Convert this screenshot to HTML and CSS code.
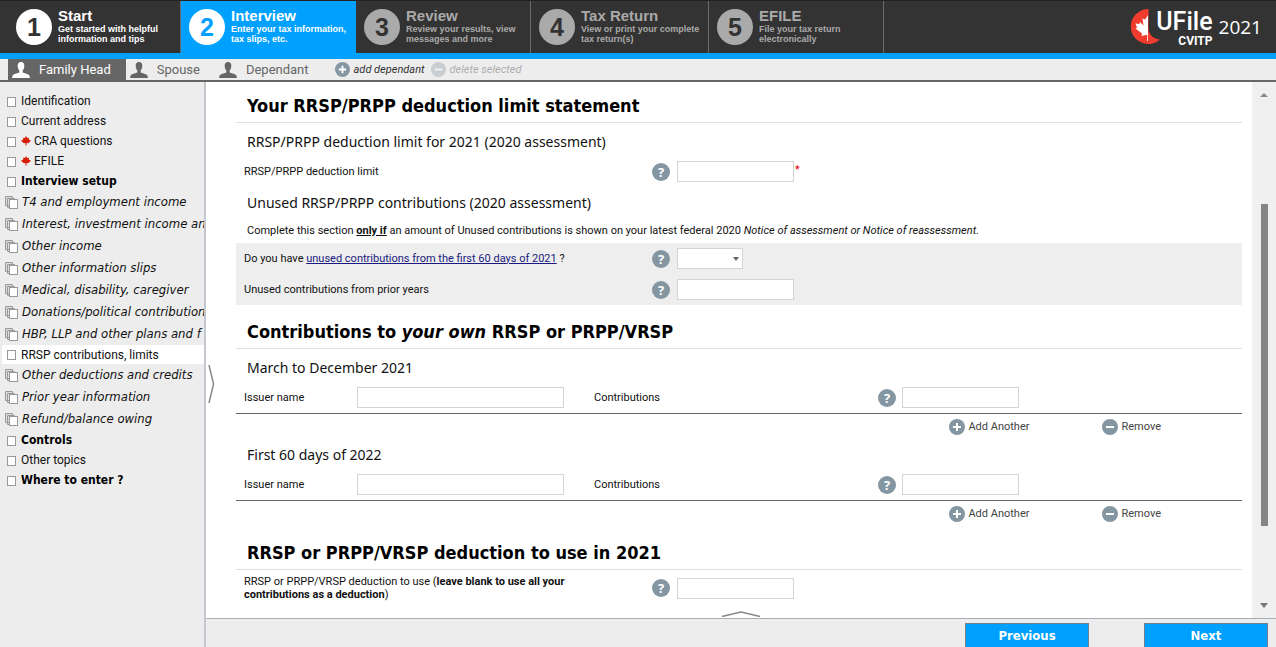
FILE: index.html
```html
<!DOCTYPE html>
<html lang="en">
<head>
<meta charset="utf-8">
<title>UFile CVITP 2021</title>
<link rel="stylesheet" href="styles.css">
</head>
<body>
<svg class="sprite" aria-hidden="true">
  <symbol id="person" viewBox="0 0 18 16"><path d="M9 0C6.500 0 5.500 1.800 5.700 4.200C5.800 6.200 6.500 7.500 7.300 8.300V10.200C6.500 11.300 1 11.800 .5 13.800L0 16H18L17.500 13.800C17 11.800 11.500 11.300 10.700 10.200V8.300C11.500 7.500 12.200 6.200 12.300 4.200C12.500 1.800 11.500 0 9 0Z"/></symbol>
  <symbol id="plus" viewBox="0 0 16 16"><circle cx="8" cy="8" r="8" fill="#8596a3"/><path d="M8 4V12M4 8H12" stroke="#fff" stroke-width="2"/></symbol>
  <symbol id="minus" viewBox="0 0 16 16"><circle cx="8" cy="8" r="8" fill="#8596a3"/><path d="M4 8H12" stroke="#fff" stroke-width="2"/></symbol>
  <symbol id="page" viewBox="0 0 13 13"><rect x="2.500" y="2.500" width="8" height="9" fill="#fff" stroke="#999"/></symbol>
  <symbol id="pages" viewBox="0 0 13 13"><path d="M.5.5H7.500V9.500H.5ZM2.500 2.500H9.500V11.500H2.500Z" fill="#ddd" stroke="#999"/><rect x="4.500" y="3.500" width="8" height="9" fill="#fff" stroke="#999"/></symbol>
  <symbol id="leaf" viewBox="0 0 10 10"><path d="M5 0L6.200 2L8 1.700L7.700 3.500L10 4.700L7.500 7L5.500 7.200V9.500H4.500V7.200L2.500 7L0 4.700L2.300 3.500L2 1.700L3.800 2Z" fill="#d81e05"/></symbol>
</svg>
<div class="app">
  <header class="top">
    <nav class="steps" aria-label="Steps">
      <a class="step done" href="#"><span class="num">1</span><span><b>Start</b><small>Get started with helpful<br>information and tips</small></span></a>
      <a class="step current" href="#"><span class="num">2</span><span><b>Interview</b><small>Enter your tax information,<br>tax slips, etc.</small></span></a>
      <a class="step" href="#"><span class="num">3</span><span><b>Review</b><small>Review your results, view<br>messages and more</small></span></a>
      <a class="step wide" href="#"><span class="num">4</span><span><b>Tax Return</b><small>View or print your complete<br>tax return(s)</small></span></a>
      <a class="step" href="#"><span class="num">5</span><span><b>EFILE</b><small>File your tax return<br>electronically</small></span></a>
    </nav>
    <div class="brand">
      <svg width="36" height="36" viewBox="0 0 36 36" aria-hidden="true"><path d="M18 0A17.500 17.500 0 1 0 30 30.500C24 30 18.500 26 18.500 19V0Z" fill="#f03c2d"/><path d="M18 6L15.200 10.500L12.500 9.500L13.500 16.500L10 13L9.300 15L5.500 14.500L7 18.500L5.500 19.500L12 24.500L11.500 27L17.200 25.800V32H18Z" fill="#fff"/></svg>
      <span class="name">UFile<small>CVITP</small></span>
      <span class="year">2021</span>
    </div>
  </header>

  <nav class="people" aria-label="Family members">
    <a class="person active" href="#"><svg width="18" height="16"><use href="#person"/></svg>Family Head</a>
    <a class="person" href="#"><svg width="18" height="16"><use href="#person"/></svg>Spouse</a>
    <a class="person" href="#"><svg width="18" height="16"><use href="#person"/></svg>Dependant</a>
    <button class="mini" type="button"><svg width="15" height="15"><use href="#plus"/></svg>add dependant</button>
    <button class="mini off" type="button" disabled><svg width="15" height="15"><use href="#minus"/></svg>delete selected</button>
  </nav>

  <div class="body">
    <nav class="side" aria-label="Interview topics">
      <ul>
        <li><a href="#"><svg><use href="#page"/></svg>Identification</a></li>
        <li><a href="#"><svg><use href="#page"/></svg>Current address</a></li>
        <li><a href="#"><svg><use href="#page"/></svg><svg class="leaf"><use href="#leaf"/></svg>CRA questions</a></li>
        <li><a href="#"><svg><use href="#page"/></svg><svg class="leaf"><use href="#leaf"/></svg>EFILE</a></li>
        <li class="strong"><a href="#"><svg><use href="#page"/></svg>Interview setup</a></li>
        <li class="group"><a href="#"><svg><use href="#pages"/></svg>T4 and employment income</a></li>
        <li class="group"><a href="#"><svg><use href="#pages"/></svg>Interest, investment income and</a></li>
        <li class="group"><a href="#"><svg><use href="#pages"/></svg>Other income</a></li>
        <li class="group"><a href="#"><svg><use href="#pages"/></svg>Other information slips</a></li>
        <li class="group"><a href="#"><svg><use href="#pages"/></svg>Medical, disability, caregiver</a></li>
        <li class="group"><a href="#"><svg><use href="#pages"/></svg>Donations/political contributions</a></li>
        <li class="group"><a href="#"><svg><use href="#pages"/></svg>HBP, LLP and other plans and f</a></li>
        <li class="selected"><a href="#"><svg><use href="#page"/></svg>RRSP contributions, limits</a></li>
        <li class="group"><a href="#"><svg><use href="#pages"/></svg>Other deductions and credits</a></li>
        <li class="group"><a href="#"><svg><use href="#pages"/></svg>Prior year information</a></li>
        <li class="group"><a href="#"><svg><use href="#pages"/></svg>Refund/balance owing</a></li>
        <li class="strong"><a href="#"><svg><use href="#page"/></svg>Controls</a></li>
        <li><a href="#"><svg><use href="#page"/></svg>Other topics</a></li>
        <li class="strong"><a href="#"><svg><use href="#page"/></svg>Where to enter ?</a></li>
      </ul>
    </nav>

    <div class="work">
      <button class="grip grip-side" type="button" aria-label="Toggle topics"><svg width="7" height="38" viewBox="0 0 7 38"><path d="M1 0L5.500 19L1 38" fill="none" stroke="#888" stroke-width="1.500"/></svg></button>
      <main class="form">
        <h2>Your RRSP/PRPP deduction limit statement</h2>
        <h3>RRSP/PRPP deduction limit for 2021 (2020 assessment)</h3>
        <div class="row">
          <label for="limit">RRSP/PRPP deduction limit</label>
          <button class="help" type="button" aria-label="Help">?</button>
          <div class="field"><input class="amount" id="limit" type="text"><span class="req">*</span></div>
        </div>
        <h3>Unused RRSP/PRPP contributions (2020 assessment)</h3>
        <p class="note">Complete this section <b class="under">only if</b> an amount of Unused contributions is shown on your latest federal 2020 <i>Notice of assessment or Notice of reassessment.</i></p>
        <div class="shade">
          <div class="row">
            <label for="first60">Do you have <a href="#">unused contributions from the first 60 days of 2021</a> ?</label>
            <button class="help" type="button" aria-label="Help">?</button>
            <div class="pick"><select id="first60"><option></option><option>Yes</option><option>No</option></select><svg width="6" height="4" viewBox="0 0 6 4" aria-hidden="true"><path d="M0 0H6L3 4Z" fill="#666"/></svg></div>
          </div>
          <div class="row">
            <label for="prior">Unused contributions from prior years</label>
            <button class="help" type="button" aria-label="Help">?</button>
            <div class="field"><input class="amount" id="prior" type="text"></div>
          </div>
        </div>

        <h2>Contributions to <i>your own</i> RRSP or PRPP/VRSP</h2>
        <h3>March to December 2021</h3>
        <div class="row issuer">
          <label for="iss1">Issuer name</label><input id="iss1" type="text">
          <label for="con1">Contributions</label>
          <button class="help" type="button" aria-label="Help">?</button>
          <div class="field"><input class="amount" id="con1" type="text"></div>
        </div>
        <div class="acts">
          <button type="button"><svg width="16" height="16"><use href="#plus"/></svg>Add Another</button>
          <button type="button"><svg width="16" height="16"><use href="#minus"/></svg>Remove</button>
        </div>
        <h3>First 60 days of 2022</h3>
        <div class="row issuer">
          <label for="iss2">Issuer name</label><input id="iss2" type="text">
          <label for="con2">Contributions</label>
          <button class="help" type="button" aria-label="Help">?</button>
          <div class="field"><input class="amount" id="con2" type="text"></div>
        </div>
        <div class="acts">
          <button type="button"><svg width="16" height="16"><use href="#plus"/></svg>Add Another</button>
          <button type="button"><svg width="16" height="16"><use href="#minus"/></svg>Remove</button>
        </div>

        <h2>RRSP or PRPP/VRSP deduction to use in 2021</h2>
        <div class="row tall">
          <label for="use">RRSP or PRPP/VRSP deduction to use (<b>leave blank to use all your contributions as a deduction</b>)</label>
          <button class="help" type="button" aria-label="Help">?</button>
          <div class="field"><input class="amount" id="use" type="text"></div>
        </div>
      </main>
      <div class="scroll" aria-hidden="true">
        <svg width="8" height="4" viewBox="0 0 8 4"><path d="M0 4L4 0L8 4Z" fill="#888"/></svg>
        <div class="track"><div class="thumb"></div></div>
        <svg width="8" height="5" viewBox="0 0 8 5"><path d="M0 0H8L4 5Z" fill="#777"/></svg>
      </div>
      <button class="grip grip-foot" type="button" aria-label="Expand panel"><svg width="40" height="6" viewBox="0 0 40 6"><path d="M1 5.500L20 1L39 5.500" fill="none" stroke="#888" stroke-width="1.500"/></svg></button>
      <footer class="foot">
        <button type="button">Previous</button>
        <button type="button">Next</button>
      </footer>
    </div>
  </div>
</div>
</body>
</html>
```
FILE: styles.css
```css
* { box-sizing: border-box; }
body {
  margin: 0;
  font: 11px/16px Roboto, "Liberation Sans", sans-serif;
  color: #111;
  background: #fff;
}
a { color: inherit; text-decoration: none; }
button { border: 0; padding: 0; background: none; font: inherit; color: inherit; }
.sprite { position: absolute; width: 0; height: 0; }
.app { display: flex; flex-direction: column; height: 100vh; overflow: hidden; }

/* step bar */
.top {
  display: flex;
  justify-content: space-between;
  background: #333;
  border-top: 1px solid #222;
  border-bottom: 6px solid #00a0ff;
  font-family: "Liberation Sans", Arial, sans-serif;
}
.steps { display: flex; }
.step {
  display: flex;
  align-items: center;
  gap: 6px;
  width: 175px;
  height: 52px;
  padding-left: 8px;
  border-right: 1px solid #666b70;
  color: #aaa;
  white-space: nowrap;
}
.step.done { width: 181px; padding-left: 16px; color: #fff; }
.step.wide { width: 178px; }
.step.current { background: #00a0ff; color: #fff; border-color: #00a0ff; }
.num {
  width: 36px;
  height: 36px;
  flex: none;
  border-radius: 50%;
  background: #aaa;
  color: #333;
  font-size: 25px;
  font-weight: bold;
  line-height: 36px;
  text-align: center;
}
.done .num, .current .num { background: #fff; }
.current .num { color: #00a0ff; }
.step b { display: block; margin-top: -4px; font-size: 15px; line-height: 17px; }
.step small { display: block; font-size: 9px; font-weight: bold; line-height: 10px; }
.brand { display: flex; align-items: center; padding-right: 14px; color: #fff; }
.name { display: grid; margin-left: -10px; font: 500 25px/30px Roboto, sans-serif; }
.name small { margin-top: -3px; font-size: 12px; font-weight: 700; line-height: 14px; text-align: right; }
.year { margin-left: 6px; font: 19px/24px "Open Sans", sans-serif; }

/* family member tabs */
.people {
  display: flex;
  height: 23px;
  padding-left: 8px;
  background: #ededed;
  border-bottom: 2px solid #666;
}
.person {
  display: flex;
  align-items: center;
  gap: 9px;
  padding: 0 15px 0 4px;
  color: #666;
  font-size: 13px;
  fill: #666;
}
.person.active { background: #666; color: #fff; fill: #fff; }
.mini { display: flex; align-items: center; gap: 4px; margin-left: 6px; font-style: italic; color: #333; }
.person + .mini { margin-left: 11px; }
.mini.off { opacity: .35; }

/* topic list */
.body { flex: 1; display: flex; min-height: 0; }
.side { width: 206px; flex: none; overflow: hidden; background: #ededed; border-right: 2px solid #c3c8cf; }
.side ul { margin: 0; padding: 9px 0 0 2px; list-style: none; }
.side a { display: flex; align-items: center; height: 20px; padding-left: 3px; font-size: 12px; white-space: nowrap; }
.side svg { width: 13px; height: 13px; flex: none; margin-right: 3px; }
.side .leaf { width: 10px; height: 10px; }
.side .strong a { color: #000; font-family: "DejaVu Sans Condensed", sans-serif; font-weight: bold; }
.side .group a { height: 22px; font: italic 13px/16px "DejaVu Sans Condensed", sans-serif; }
.side .group svg { margin-right: 4px; }
.side .selected a { height: 19px; background: #fff; }

/* form */
.work {
  position: relative;
  flex: 1;
  min-width: 0;
  display: grid;
  grid-template: minmax(0, 1fr) 29px / minmax(0, 1fr) 24px;
}
.form { overflow: hidden; padding: 8px 10px 0 30px; }
.shade { background: #eee; }
h2 {
  margin: 11px 0 0;
  padding-left: 11px;
  border-bottom: 1px solid #e0e0e0;
  color: #000;
  font-family: "DejaVu Sans Condensed", sans-serif;
  font-size: 18px;
  line-height: 32px;
}
h2:first-child { margin-top: 0; }
h3 {
  margin: 5px 0 3px;
  padding-left: 11px;
  font: 14px/22px "Noto Sans", sans-serif;
}
h2 + h3 { margin-top: 8px; }
.note { margin: 7px 0 2px; padding-left: 11px; line-height: 20px; }
.under { text-decoration: underline; }
.row {
  display: grid;
  grid-template-columns: 416fr 25px 565fr;
  align-items: center;
  min-height: 31px;
}
.row > label:first-child { padding-left: 8px; }
.row a { color: #1a1a80; text-decoration: underline; }
.row.issuer { grid-template-columns: 121px 237fr 284fr 24px 340fr; min-height: 32px; border-bottom: 1px solid #666; }
.row.issuer > input { margin-right: 30px; }
.row.tall { min-height: 36px; line-height: 13px; }
.row.tall label { max-width: 350px; }
.help {
  width: 18px;
  height: 18px;
  border-radius: 50%;
  background: #8596a3;
  color: #fff;
  font: bold 13px/18px "Open Sans", sans-serif;
}
input, select {
  min-width: 0;
  height: 21px;
  padding: 0 4px;
  border: 1px solid #d4d4d4;
  border-radius: 0;
  background: #fff;
  font: inherit;
}
.amount { width: 117px; }
.field { display: flex; gap: 1px; }
.req { color: #e00; line-height: 18px; }
.pick { display: grid; width: 66px; align-items: center; }
.pick select, .pick svg { grid-area: 1 / 1; }
.pick select { appearance: none; width: 100%; }
.pick svg { justify-self: end; margin-right: 4px; pointer-events: none; }
.acts { display: flex; justify-content: flex-end; gap: 73px; height: 25px; padding-right: 81px; color: #444; }
.acts button { display: flex; align-items: center; gap: 3px; }

/* scrollbar, grips, footer */
.scroll { display: flex; flex-direction: column; align-items: center; padding: 11px 0 10px; background: #f0f0f0; }
.track { flex: 1; align-self: stretch; display: grid; grid-template-rows: 106fr 320fr 77fr; justify-content: center; }
.thumb { grid-row: 2; width: 7px; background: #858585; }
.grip { position: absolute; display: flex; }
.grip-side { left: 2px; top: 50%; }
.grip-foot { left: 50%; bottom: 30px; margin-left: -20px; }
.foot {
  grid-column: 1 / 3;
  display: flex;
  justify-content: flex-end;
  gap: 55px;
  padding: 4px 8px 0 0;
  background: #ededed;
  border-top: 1px solid #a9adb8;
}
.foot button {
  width: 124px;
  border: 1px solid #71808c;
  border-bottom: 0;
  background: #00a0ff;
  color: #fff;
  font: bold 13px/16px "DejaVu Sans Condensed", sans-serif;
}
```
